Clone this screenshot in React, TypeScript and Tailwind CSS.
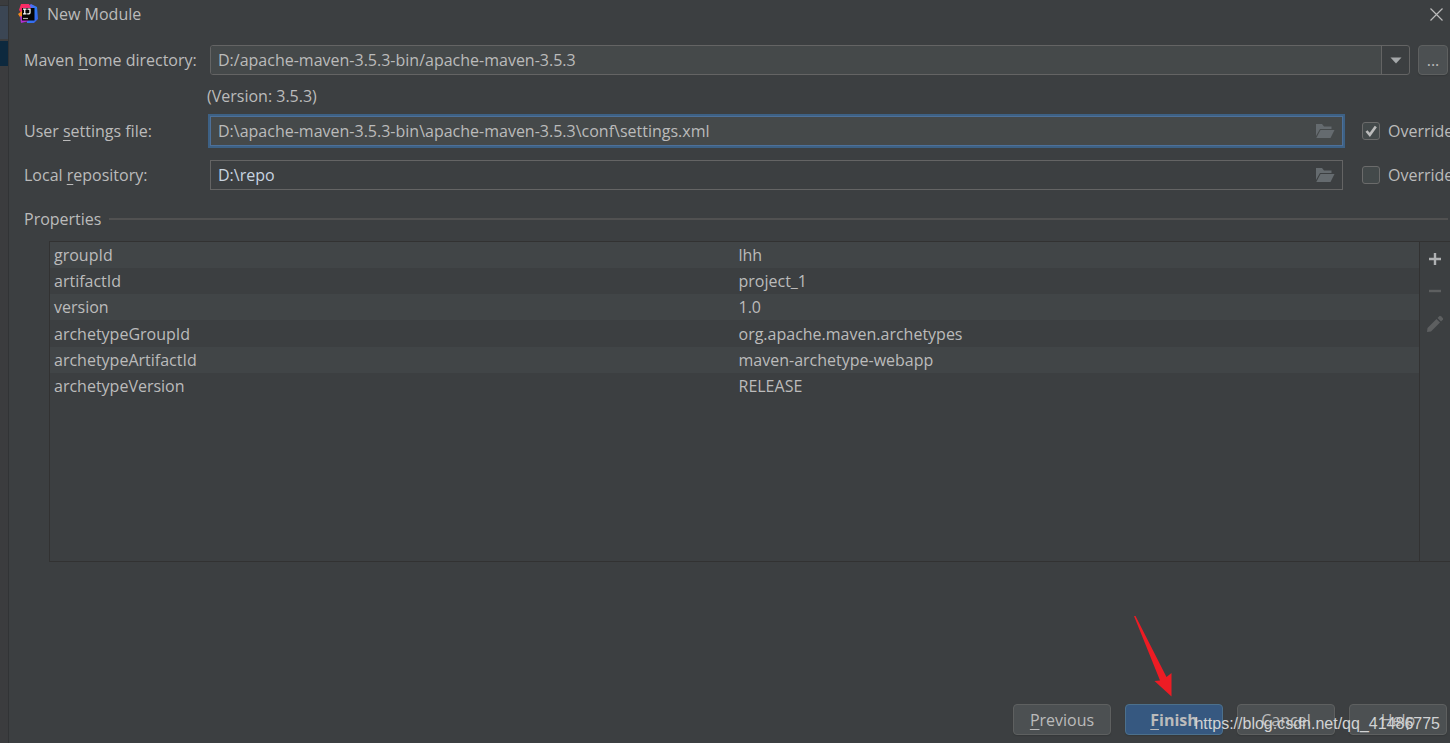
import { useState, type ReactNode } from "react";

const properties = [
  ["groupId", "lhh"],
  ["artifactId", "project_1"],
  ["version", "1.0"],
  ["archetypeGroupId", "org.apache.maven.archetypes"],
  ["archetypeArtifactId", "maven-archetype-webapp"],
  ["archetypeVersion", "RELEASE"],
];

function Mnemonic({ children }: { children: ReactNode }) {
  return <span className="underline decoration-1 underline-offset-3">{children}</span>;
}

function IdeLogo() {
  return (
    <svg width="20" height="20" viewBox="0 0 20 20" aria-hidden="true">
      <defs>
        <linearGradient id="logo-blue" x1="0" y1="0" x2="1" y2="1">
          <stop offset="0" stopColor="#7a5cf0" />
          <stop offset="0.5" stopColor="#2f7cf6" />
          <stop offset="1" stopColor="#3b5fe8" />
        </linearGradient>
        <linearGradient id="logo-pink" x1="0" y1="0" x2="1" y2="1">
          <stop offset="0" stopColor="#ff2d55" />
          <stop offset="1" stopColor="#e8288c" />
        </linearGradient>
      </defs>
      <path d="M13 0L19 3L20 15L16 19L9 19L8 4Z" fill="url(#logo-blue)" />
      <path d="M3 0L11 0L13 4L5 11L1 6Z" fill="url(#logo-pink)" />
      <path d="M0 10L4 7L5 14L2 13Z" fill="#f58a1f" />
      <path d="M2 12L6 13L11 17L3 19Z" fill="#b32fd0" />
      <path d="M4 4H16.500V16.500H4Z" fill="#050505" />
      <path d="M5 5.200H8.500M6.750 5V10M5 9.800H8.500M9.500 5.200H12V8.500Q12 9.800 11 9.800H9.200" fill="none" stroke="#fff" strokeWidth="1.300" />
      <path d="M5 14.500H10" stroke="#aaa" strokeWidth="1.200" />
    </svg>
  );
}

function FolderIcon() {
  return (
    <svg width="20" height="16" viewBox="0 0 20 16" fill="#656b6f" aria-hidden="true">
      <path d="M1 1H7L9 3.500H16.500V6H5L1 13Z" />
      <path d="M5.500 7H19.500L15.500 15H1.300Z" />
    </svg>
  );
}

function PathRow({
  id,
  label,
  value,
  checked,
}: {
  id: string;
  label: ReactNode;
  value: string;
  checked: boolean;
}) {
  const [override, setOverride] = useState(checked);
  const [path, setPath] = useState(value);
  return (
    <div className="flex h-[30px] items-center">
      <label htmlFor={id} className="w-[186px] shrink-0">
        {label}
      </label>
      <div
        className={
          override
            ? "flex h-[30px] min-w-0 flex-1 items-center border border-[#4d7099] bg-[#45494a] pr-[7px] ring-2 ring-[#3d6185]"
            : "flex h-[30px] min-w-0 flex-1 items-center border border-[#646464] pr-[7px] text-[#c8d4e0]"
        }
      >
        <input
          id={id}
          value={path}
          onChange={(e) => setPath(e.target.value)}
          className="h-full min-w-0 flex-1 bg-transparent px-[7px] outline-none"
        />
        <button type="button" aria-label="Browse">
          <FolderIcon />
        </button>
      </div>
      <label className="ml-[19px] flex w-[88px] shrink-0 items-center gap-2 overflow-hidden whitespace-nowrap">
        <span className="grid h-[18px] w-[18px] shrink-0">
          <input
            type="checkbox"
            checked={override}
            onChange={(e) => setOverride(e.target.checked)}
            className="col-start-1 row-start-1 appearance-none rounded-[3px] border border-[#6b6b6b] bg-[#43494a]"
          />
          {override && (
            <svg viewBox="0 0 18 18" className="pointer-events-none col-start-1 row-start-1" aria-hidden="true">
              <path d="M4.500 9L7.800 12.800L13.800 4.500" fill="none" stroke="#bbb" strokeWidth="2.600" />
            </svg>
          )}
        </span>
        Override
      </label>
    </div>
  );
}

const buttonClass =
  "h-[31px] w-[98px] rounded border border-[#5e6060] bg-[#4c5052] shadow-[0_1px_1px_#35383a]";

export default function App() {
  const [home, setHome] = useState("D:/apache-maven-3.5.3-bin/apache-maven-3.5.3");
  return (
    <div className="relative flex min-h-screen overflow-hidden bg-[#3c3f41] font-['Open_Sans','Noto_Sans',sans-serif] text-[16px] leading-6 text-[#bbbbbb]">
      <div className="flex w-[9px] shrink-0 flex-col border-r border-[#313335] bg-[#3b3c3e]">
        <div className="mt-[5px] h-[34px] border-t border-[#323436] bg-[#3b4654]" />
        <div className="mt-[2px] h-[25px] bg-[#0d293e]" />
      </div>

      <main className="flex min-w-0 flex-1 flex-col">
        <header className="flex h-[28px] items-center pl-[9px] pr-[7px]">
          <IdeLogo />
          <h1 className="ml-[9px] flex-1">New Module</h1>
          <button type="button" aria-label="Close">
            <svg width="13" height="13" viewBox="0 0 13 13" aria-hidden="true">
              <path d="M0.500 0.500L12.500 12.500M12.500 0.500L0.500 12.500" stroke="#bbb" strokeWidth="1.200" />
            </svg>
          </button>
        </header>

        <form className="flex flex-col pl-[15px] pt-[17px]" onSubmit={(e) => e.preventDefault()}>
          <div className="flex h-[30px] items-center pr-[2px]">
            <label htmlFor="maven-home" className="w-[186px] shrink-0">
              Maven <Mnemonic>h</Mnemonic>ome directory:
            </label>
            <div className="flex h-[30px] min-w-0 flex-1 overflow-hidden rounded-[3px] border border-[#646464]">
              <input
                id="maven-home"
                value={home}
                onChange={(e) => setHome(e.target.value)}
                className="min-w-0 flex-1 bg-[#45494a] px-[7px] outline-none"
              />
              <button
                type="button"
                aria-label="Show directories"
                className="flex w-[28px] items-center justify-center border-l border-[#646464]"
              >
                <svg width="12" height="7" viewBox="0 0 12 7" aria-hidden="true">
                  <path d="M0.500 0.500H11.500L6 6.500Z" fill="#a5a8aa" />
                </svg>
              </button>
            </div>
            <button
              type="button"
              aria-label="Choose directory"
              className="ml-2 h-[30px] w-[30px] rounded border border-[#5e6060] bg-[#4c5052] shadow-[0_1px_1px_#35383a]"
            >
              ...
            </button>
          </div>
          <p className="flex h-[41px] items-center pl-[183px]">(Version: 3.5.3)</p>
          <div className="flex flex-col gap-[14px]">
            <PathRow
              id="settings-file"
              label={
                <>
                  User <Mnemonic>s</Mnemonic>ettings file:
                </>
              }
              value="D:\apache-maven-3.5.3-bin\apache-maven-3.5.3\conf\settings.xml"
              checked
            />
            <PathRow
              id="local-repository"
              label={
                <>
                  Local <Mnemonic>r</Mnemonic>epository:
                </>
              }
              value="D:\repo"
              checked={false}
            />
          </div>
        </form>

        <section className="flex flex-col pl-[15px] pt-[17px]">
          <div className="flex items-center gap-2 pr-[2px]">
            <h2>Properties</h2>
            <div className="h-[2px] flex-1 bg-[#515151]" />
          </div>
          <div className="ml-[25px] mt-[10px] flex h-[321px] border border-r-0 border-[#323232]">
            <div className="min-w-0 flex-1">
              <table className="h-[157px] w-full table-fixed border-collapse text-left">
                <tbody>
                  {properties.map(([name, value]) => (
                    <tr key={name} className="odd:bg-[#414547]">
                      <th scope="row" className="w-1/2 py-0 pl-1 font-normal">
                        {name}
                      </th>
                      <td className="py-0 pl-1">{value}</td>
                    </tr>
                  ))}
                </tbody>
              </table>
            </div>
            <div className="flex w-[31px] shrink-0 flex-col items-center gap-4 border-l border-[#323232] pt-[9px]">
              <button type="button" aria-label="Add">
                <svg width="16" height="16" viewBox="0 0 16 16" aria-hidden="true">
                  <path d="M2 8H14M8 2V14" stroke="#afb1b3" strokeWidth="2.400" />
                </svg>
              </button>
              <button type="button" aria-label="Remove" disabled>
                <svg width="16" height="16" viewBox="0 0 16 16" aria-hidden="true">
                  <path d="M2 8H14" stroke="#5d5f60" strokeWidth="2.400" />
                </svg>
              </button>
              <button type="button" aria-label="Edit" disabled>
                <svg width="18" height="18" viewBox="0 0 18 18" fill="#5d5f60" aria-hidden="true">
                  <path d="M1 17L1.500 13L10.500 4L14 7.500L5 16.500Z" />
                  <path d="M11.500 3L13.500 1Q14.200 0.600 14.900 1.200L16.800 3.100Q17.400 3.800 17 4.500L15 6.500Z" />
                </svg>
              </button>
            </div>
          </div>
        </section>

        <footer className="mt-auto flex justify-end gap-[14px] pb-2 pr-[3px]">
          <button type="button" className={buttonClass}>
            <Mnemonic>P</Mnemonic>revious
          </button>
          <button
            type="button"
            className="h-[31px] w-[98px] rounded border border-[#4c708c] bg-[#365880] font-bold shadow-[0_1px_1px_#35383a]"
          >
            <Mnemonic>F</Mnemonic>inish
          </button>
          <button type="button" className={buttonClass}>
            Cancel
          </button>
          <button type="button" className={buttonClass}>
            Help
          </button>
        </footer>
      </main>

      <svg
        className="pointer-events-none absolute bottom-[46px] right-[277px]"
        width="40"
        height="82"
        viewBox="0 0 40 82"
        aria-hidden="true"
      >
        <path d="M1 1L2.500 1L33.500 62L38.500 58L38.500 81.500L21.500 66L27 65.500Z" fill="#ed1c24" />
      </svg>
      <span className="pointer-events-none absolute bottom-[7px] right-[10px] font-['Liberation_Sans',sans-serif] text-[16px] text-[#d2d3d4]">
        https://blog.csdn.net/qq_41486775
      </span>
    </div>
  );
}
